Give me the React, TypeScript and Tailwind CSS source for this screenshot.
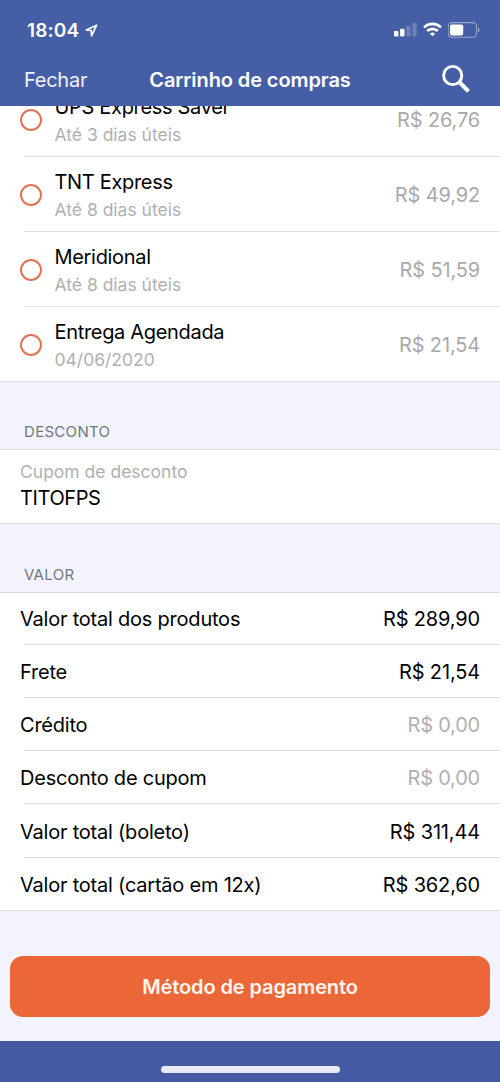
import { useState } from "react";

const SHIPPING_OPTIONS = [
  { id: "ups", name: "UPS Express Saver", deadline: "Até 3 dias úteis", price: "R$ 26,76" },
  { id: "tnt", name: "TNT Express", deadline: "Até 8 dias úteis", price: "R$ 49,92" },
  { id: "meridional", name: "Meridional", deadline: "Até 8 dias úteis", price: "R$ 51,59" },
  { id: "agendada", name: "Entrega Agendada", deadline: "04/06/2020", price: "R$ 21,54" },
];

const TOTALS = [
  { label: "Valor total dos produtos", value: "R$ 289,90", muted: false },
  { label: "Frete", value: "R$ 21,54", muted: false },
  { label: "Crédito", value: "R$ 0,00", muted: true },
  { label: "Desconto de cupom", value: "R$ 0,00", muted: true },
  { label: "Valor total (boleto)", value: "R$ 311,44", muted: false },
  { label: "Valor total (cartão em 12x)", value: "R$ 362,60", muted: false },
];

function StatusBar() {
  return (
    <div className="flex h-[54px] items-center justify-between pt-[7px] pr-5 pl-[27px]">
      <div className="flex items-center gap-[6px]">
        <span className="pt-px text-[19px] font-semibold tracking-[0.2px]">18:04</span>
        <svg width="13" height="13" viewBox="0 0 13 13" fill="none">
          <path d="M11.6 1.2 1.2 5.9l5 .6.4 5.3z" stroke="currentColor" strokeWidth="1.7" strokeLinejoin="round" />
        </svg>
      </div>
      <div className="flex items-center gap-[6px] pb-[2px]">
        <svg width="23" height="15" viewBox="0 0 23 15" fill="currentColor">
          <rect x="0" y="9" width="4.4" height="5.5" rx="1" />
          <rect x="6.1" y="6.7" width="4.4" height="7.8" rx="1" />
          <rect x="12.2" y="3.7" width="4.4" height="10.8" rx="1" opacity="0.22" />
          <rect x="18.3" y="0.7" width="4.4" height="13.8" rx="1" opacity="0.22" />
        </svg>
        <svg width="19" height="15" viewBox="0 0 19 15" fill="none" stroke="currentColor" strokeWidth="2.6">
          <path d="M1 5.3a12.2 12.2 0 0 1 17 0" />
          <path d="M4.2 9a7.6 7.6 0 0 1 10.6 0" />
          <path d="M9.5 14.3 6.9 11.7a3.7 3.7 0 0 1 5.2 0z" fill="currentColor" stroke="none" />
        </svg>
        <svg width="32" height="16" viewBox="0 0 32 16" fill="none">
          <rect x="0.1" y="0.6" width="28.5" height="14.6" rx="4" stroke="currentColor" strokeWidth="1.1" opacity="0.45" />
          <rect x="2" y="2.4" width="13.2" height="11" rx="1.8" fill="currentColor" />
          <path d="M30 5.5c1.9.8 1.9 4 0 4.8z" fill="currentColor" opacity="0.5" />
        </svg>
      </div>
    </div>
  );
}

function Header() {
  return (
    <header className="relative z-10 h-[106px] shrink-0 bg-[#465ea5] text-white">
      <StatusBar />
      <nav className="grid h-[52px] grid-cols-[1fr_auto_1fr] items-center pr-[29px] pl-[29px]">
        <button type="button" className="-ml-[5px] justify-self-start text-[20px] tracking-[-0.25px] text-[#f0f3fb]">
          Fechar
        </button>
        <h1 className="text-[20px] font-semibold tracking-[-0.1px]">Carrinho de compras</h1>
        <button type="button" aria-label="Buscar" className="justify-self-end pb-[2px]">
          <svg width="30" height="30" viewBox="0 0 30 30" fill="none" stroke="currentColor">
            <circle cx="11.7" cy="11.5" r="9.1" strokeWidth="2.9" />
            <path d="m18.3 18 9.2 9.4" strokeWidth="4" />
          </svg>
        </button>
      </nav>
    </header>
  );
}

function SectionTitle({ children }: { children: string }) {
  return <h2 className="px-6 pb-[7px] text-[15px] leading-5 tracking-[0.3px] text-[#74767f]">{children}</h2>;
}

export default function App() {
  const [selected, setSelected] = useState("");

  return (
    <div className="flex h-[1082px] w-[500px] flex-col overflow-hidden bg-[#f2f3fc] font-[Inter,sans-serif] text-black">
      <Header />

      <main className="-mt-6 flex flex-1 flex-col">
        <ul role="radiogroup" className="border-b border-[#dcdce2] bg-white">
          {SHIPPING_OPTIONS.map((option) => (
            <li key={option.id} className="group flex h-[75px] flex-col last:h-[74px]">
              <button
                type="button"
                role="radio"
                aria-checked={selected === option.id}
                onClick={() => setSelected(option.id)}
                className="flex w-full flex-1 items-center px-5 pt-px text-left"
              >
                <span className="flex size-[22px] shrink-0 items-center justify-center rounded-full border-2 border-[#e17452]">
                  {selected === option.id && <span className="size-3 rounded-full bg-[#e17452]" />}
                </span>
                <span className="ml-[12.5px] flex-1 pt-[2px]">
                  <span className="block text-[20px] leading-[27px] tracking-[-0.32px]">{option.name}</span>
                  <span className="block text-[17.5px] leading-[27px] text-[#b0b0b0]">{option.deadline}</span>
                </span>
                <span className="text-[20px] tracking-[-0.15px] text-[#a9a9a9]">{option.price}</span>
              </button>
              <div className="ml-6 h-px bg-[#dedee0] group-last:hidden" />
            </li>
          ))}
        </ul>

        <div className="pt-10">
          <SectionTitle>DESCONTO</SectionTitle>
        </div>
        <label className="block h-[75px] border-y border-[#dcdce2] bg-white px-5 pt-[9px]">
          <span className="block text-[17.5px] leading-[26px] text-[#b0b0b0]">Cupom de desconto</span>
          <input
            defaultValue="TITOFPS"
            className="block w-full text-[20px] leading-[27px] tracking-[-0.4px] outline-none"
          />
        </label>

        <div className="pt-[41px]">
          <SectionTitle>VALOR</SectionTitle>
        </div>
        <dl className="border-y border-[#dcdce2] bg-white">
          {TOTALS.map((total) => (
            <div
              key={total.label}
              className="group flex h-[53px] flex-col first:h-[52px] last:h-[52px] nth-[5]:h-[54px]"
            >
              <div className="flex flex-1 items-center justify-between px-5 pt-[2px] text-[20px] group-first:pt-0">
                <dt className="tracking-[-0.22px]">{total.label}</dt>
                <dd className={total.muted ? "tracking-[-0.2px] text-[#b0b0b0]" : "tracking-[-0.15px]"}>
                  {total.value}
                </dd>
              </div>
              <div className="ml-6 h-px bg-[#dedee0] group-last:hidden" />
            </div>
          ))}
        </dl>

        <div className="flex flex-1 items-end px-[10px] pb-6">
          <button
            type="button"
            className="h-[61px] w-full rounded-[13px] bg-[#ec6737] text-[20px] font-semibold tracking-[-0.1px] text-[#fff5ee]"
          >
            Método de pagamento
          </button>
        </div>
      </main>

      <footer className="flex h-[41px] shrink-0 justify-center bg-[#4659a3] pt-[25px]">
        <div className="h-[7px] w-[179px] rounded-full bg-[#e8eaf4]" />
      </footer>
    </div>
  );
}
